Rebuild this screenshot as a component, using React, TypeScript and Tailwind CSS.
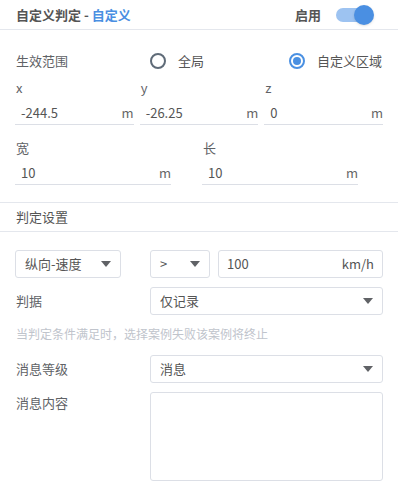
import { useState } from "react";

const font = { fontFamily: '"Noto Sans CJK SC", "Noto Sans", sans-serif' };

function Caret() {
  return (
    <svg width="10" height="6" viewBox="0 0 10 6" className="shrink-0">
      <path d="M0 0 L10 0 L5 6 Z" fill="#606266" />
    </svg>
  );
}

function LineInput({ value, unit, className }: { value: string; unit: string; className?: string }) {
  return (
    <div className={`flex items-center h-[24px] border-b border-[#dcdfe6] pl-[6px] ${className ?? ""}`}>
      <span className="flex-1 text-[13px] text-[#555]">{value}</span>
      <span className="text-[13px] text-[#666]">{unit}</span>
    </div>
  );
}

function Select({ value, className }: { value: string; className?: string }) {
  return (
    <div className={`flex items-center h-[28px] border border-[#dcdfe6] rounded-[3px] px-[9px] ${className ?? ""}`}>
      <span className="flex-1 text-[13px] text-[#555]">{value}</span>
      <Caret />
    </div>
  );
}

function Radio({ checked, label, onClick }: { checked: boolean; label: string; onClick: () => void }) {
  return (
    <button onClick={onClick} className="flex items-center gap-[12px]">
      {checked ? (
        <span className="w-[16px] h-[16px] rounded-full border-2 border-[#4a90e2] flex items-center justify-center">
          <span className="w-[8px] h-[8px] rounded-full bg-[#4a90e2]" />
        </span>
      ) : (
        <span className="w-[16px] h-[16px] rounded-full border-2 border-[#5f6b78]" />
      )}
      <span className="text-[13px] text-[#555]">{label}</span>
    </button>
  );
}

export default function App() {
  const [enabled, setEnabled] = useState(true);
  const [scope, setScope] = useState<"global" | "custom">("custom");

  return (
    <div className="w-[398px] h-[497px] bg-white text-[#606266] overflow-hidden" style={font}>
      <div className="flex items-center justify-between h-[30px] pl-[16px] pr-[26px] border-b border-[#e4e7ed]">
        <div className="text-[13px] font-bold text-[#555]">
          自定义判定 - <span className="text-[#4a8fe2]">自定义</span>
        </div>
        <div className="flex items-center gap-[15px]">
          <span className="text-[13px] font-bold text-[#555]">启用</span>
          <button
            onClick={() => setEnabled(!enabled)}
            className={`relative w-[36px] h-[14px] rounded-full ${enabled ? "bg-[#9dc3f1]" : "bg-[#ccc]"}`}
          >
            <span
              className={`absolute top-[-3px] w-[20px] h-[20px] rounded-full shadow ${enabled ? "right-[-2px] bg-[#4a8fe2]" : "left-[-2px] bg-white"}`}
            />
          </button>
        </div>
      </div>

      <div className="flex items-center h-[34px] mt-[14px] pl-[16px] pr-[16px]">
        <span className="w-[134px] text-[13px]">生效范围</span>
        <div className="flex-1 flex justify-between">
          <Radio checked={scope === "global"} label="全局" onClick={() => setScope("global")} />
          <Radio checked={scope === "custom"} label="自定义区域" onClick={() => setScope("custom")} />
        </div>
      </div>

      <div className="grid grid-cols-3 gap-[6px] px-[15px] mt-[1px]">
        {[
          ["x", "-244.5"],
          ["y", "-26.25"],
          ["z", "0"],
        ].map(([k, v]) => (
          <div key={k}>
            <div className="text-[13px] h-[18px] leading-[18px] pl-[1px]">{k}</div>
            <LineInput value={v} unit="m" className="mt-[4px]" />
          </div>
        ))}
      </div>

      <div className="flex gap-[31px] px-[15px] mt-[14px]">
        {[
          ["宽", "10"],
          ["长", "10"],
        ].map(([k, v]) => (
          <div key={k} className="w-[156px]">
            <div className="text-[13px] h-[18px] leading-[18px] pl-[1px]">{k}</div>
            <LineInput value={v} unit="m" className="mt-[4px]" />
          </div>
        ))}
      </div>

      <div className="mt-[17px] border-t border-[#e4e7ed] h-[30px] flex items-center pl-[16px] border-b">
        <span className="text-[13px] text-[#555]">判定设置</span>
      </div>

      <div className="flex items-center px-[15px] mt-[18px]">
        <Select value="纵向-速度" className="w-[106px]" />
        <Select value=">" className="w-[60px] ml-[29px]" />
        <div className="flex items-center flex-1 h-[28px] ml-[8px] border border-[#dcdfe6] rounded-[3px] px-[8px]">
          <span className="flex-1 text-[13px] text-[#555]">100</span>
          <span className="text-[13px] text-[#555]">km/h</span>
        </div>
      </div>

      <div className="flex items-center px-[15px] mt-[9px]">
        <span className="w-[135px] text-[13px] pl-[1px]">判据</span>
        <Select value="仅记录" className="flex-1" />
      </div>

      <div className="px-[16px] mt-[10px] text-[12px] text-[#c0c4cc] leading-[18px]">
        当判定条件满足时，选择案例失败该案例将终止
      </div>

      <div className="flex items-center px-[15px] mt-[12px]">
        <span className="w-[135px] text-[13px] pl-[1px]">消息等级</span>
        <Select value="消息" className="flex-1" />
      </div>

      <div className="flex px-[15px] mt-[9px]">
        <span className="w-[135px] text-[13px] pl-[1px] pt-[1px]">消息内容</span>
        <textarea className="flex-1 h-[89px] border border-[#dcdfe6] rounded-[3px] resize-none outline-none p-[6px] text-[13px]" />
      </div>
    </div>
  );
}
